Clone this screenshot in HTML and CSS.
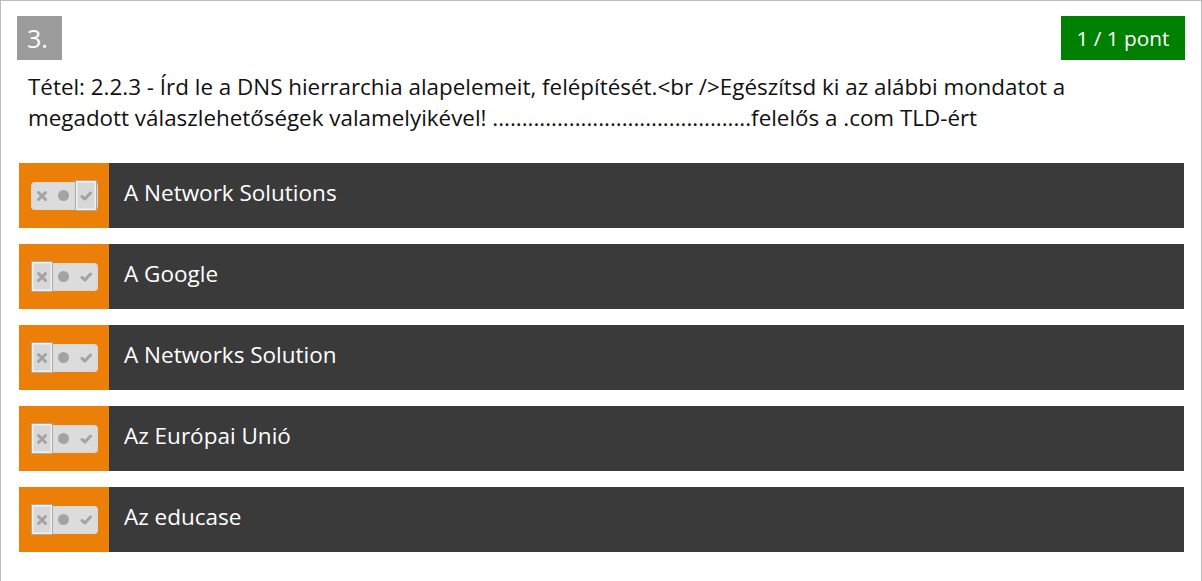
FILE: index.html
```html
<!DOCTYPE html>
<html lang="hu">
<head>
<meta charset="utf-8">
<link rel="stylesheet" href="styles.css">
</head>
<body>
<div class="question">
  <div class="q-head">
    <div class="q-num">3.</div>
    <div class="q-score">1 / 1 pont</div>
  </div>
  <div class="q-text">Tétel: 2.2.3 - Írd le a DNS hierrarchia alapelemeit, felépítését.&lt;br /&gt;Egészítsd ki az alábbi mondatot a megadott válaszlehetőségek valamelyikével! ............................................felelős a .com TLD-ért</div>
  <div class="answers">
    <div class="answer">
      <div class="ans-mark">
        <div class="toggle">
          <span class="seg"><svg viewBox="0 0 12 12" class="ic"><path d="M2.5 2.5 L9.5 9.5 M9.5 2.5 L2.5 9.5" /></svg></span>
          <span class="seg"><span class="dot"></span></span>
          <span class="seg sel"><svg viewBox="0 0 12 12" class="ic"><path d="M2 6.5 L5 9 L10.5 3" /></svg></span>
        </div>
      </div>
      <div class="ans-text">A Network Solutions</div>
    </div>
    <div class="answer">
      <div class="ans-mark">
        <div class="toggle">
          <span class="seg sel"><svg viewBox="0 0 12 12" class="ic"><path d="M2.5 2.5 L9.5 9.5 M9.5 2.5 L2.5 9.5" /></svg></span>
          <span class="seg"><span class="dot"></span></span>
          <span class="seg"><svg viewBox="0 0 12 12" class="ic"><path d="M2 6.5 L5 9 L10.5 3" /></svg></span>
        </div>
      </div>
      <div class="ans-text">A Google</div>
    </div>
    <div class="answer">
      <div class="ans-mark">
        <div class="toggle">
          <span class="seg sel"><svg viewBox="0 0 12 12" class="ic"><path d="M2.5 2.5 L9.5 9.5 M9.5 2.5 L2.5 9.5" /></svg></span>
          <span class="seg"><span class="dot"></span></span>
          <span class="seg"><svg viewBox="0 0 12 12" class="ic"><path d="M2 6.5 L5 9 L10.5 3" /></svg></span>
        </div>
      </div>
      <div class="ans-text">A Networks Solution</div>
    </div>
    <div class="answer">
      <div class="ans-mark">
        <div class="toggle">
          <span class="seg sel"><svg viewBox="0 0 12 12" class="ic"><path d="M2.5 2.5 L9.5 9.5 M9.5 2.5 L2.5 9.5" /></svg></span>
          <span class="seg"><span class="dot"></span></span>
          <span class="seg"><svg viewBox="0 0 12 12" class="ic"><path d="M2 6.5 L5 9 L10.5 3" /></svg></span>
        </div>
      </div>
      <div class="ans-text">Az Európai Unió</div>
    </div>
    <div class="answer">
      <div class="ans-mark">
        <div class="toggle">
          <span class="seg sel"><svg viewBox="0 0 12 12" class="ic"><path d="M2.5 2.5 L9.5 9.5 M9.5 2.5 L2.5 9.5" /></svg></span>
          <span class="seg"><span class="dot"></span></span>
          <span class="seg"><svg viewBox="0 0 12 12" class="ic"><path d="M2 6.5 L5 9 L10.5 3" /></svg></span>
        </div>
      </div>
      <div class="ans-text">Az educase</div>
    </div>
  </div>
</div>
</body>
</html>
```
FILE: styles.css
```css
* { box-sizing: border-box; }
html, body { margin: 0; padding: 0; background: #fff; }
body {
  font-family: "Open Sans", "DejaVu Sans", sans-serif;
  color: #111;
}
.question {
  width: 1202px;
  min-height: 600px;
  border: 1px solid #bcbcbc;
  border-bottom: none;
  padding: 15px 16px 40px 16px;
}
.q-head {
  display: flex;
  justify-content: space-between;
  align-items: flex-start;
}
.q-num {
  width: 45px;
  height: 44px;
  background: #9b9b9b;
  color: #fff;
  font-size: 25px;
  line-height: 44px;
  padding-left: 10px;
}
.q-score {
  width: 124px;
  height: 44px;
  background: #008000;
  color: #fff;
  font-size: 20.8px;
  line-height: 44px;
  text-align: center;
}
.q-text {
  margin: 11px 0 0 11px;
  font-size: 22.4px;
  line-height: 31px;
  padding-right: 60px;
}
.answers {
  margin: 30px 0 0 2px;
  width: 1165px;
  display: flex;
  flex-direction: column;
  gap: 16px;
}
.answer {
  display: flex;
  height: 65px;
  background: #3a3a3a;
}
.ans-mark {
  width: 90px;
  background: #ec7f07;
  display: flex;
  align-items: center;
  justify-content: center;
}
.ans-text {
  color: #fff;
  font-size: 22.5px;
  display: flex;
  align-items: center;
  padding-left: 15px;
  padding-bottom: 7px;
}
.toggle {
  width: 67px;
  height: 28px;
  background: #dcdcdc;
  border-radius: 4px;
  display: flex;
  align-items: center;
  box-shadow: inset 0 0 2px rgba(0,0,0,0.08);
}
.seg {
  width: 22px;
  height: 28px;
  display: flex;
  align-items: center;
  justify-content: center;
}
.seg.sel {
  height: 31px;
  border: 2px solid #f0f0f0;
  outline: 1px solid #a9a9a9;
  outline-offset: -1px;
  box-shadow: inset 0 0 0 1px #e4e4e4;
  background: #d8d8d8;
}
.ic {
  width: 12px;
  height: 12px;
  fill: none;
  stroke: #a3a3a3;
  stroke-width: 3;
  stroke-linecap: round;
  stroke-linejoin: round;
}
.dot {
  width: 11px;
  height: 11px;
  border-radius: 50%;
  background: #a3a3a3;
}
```
